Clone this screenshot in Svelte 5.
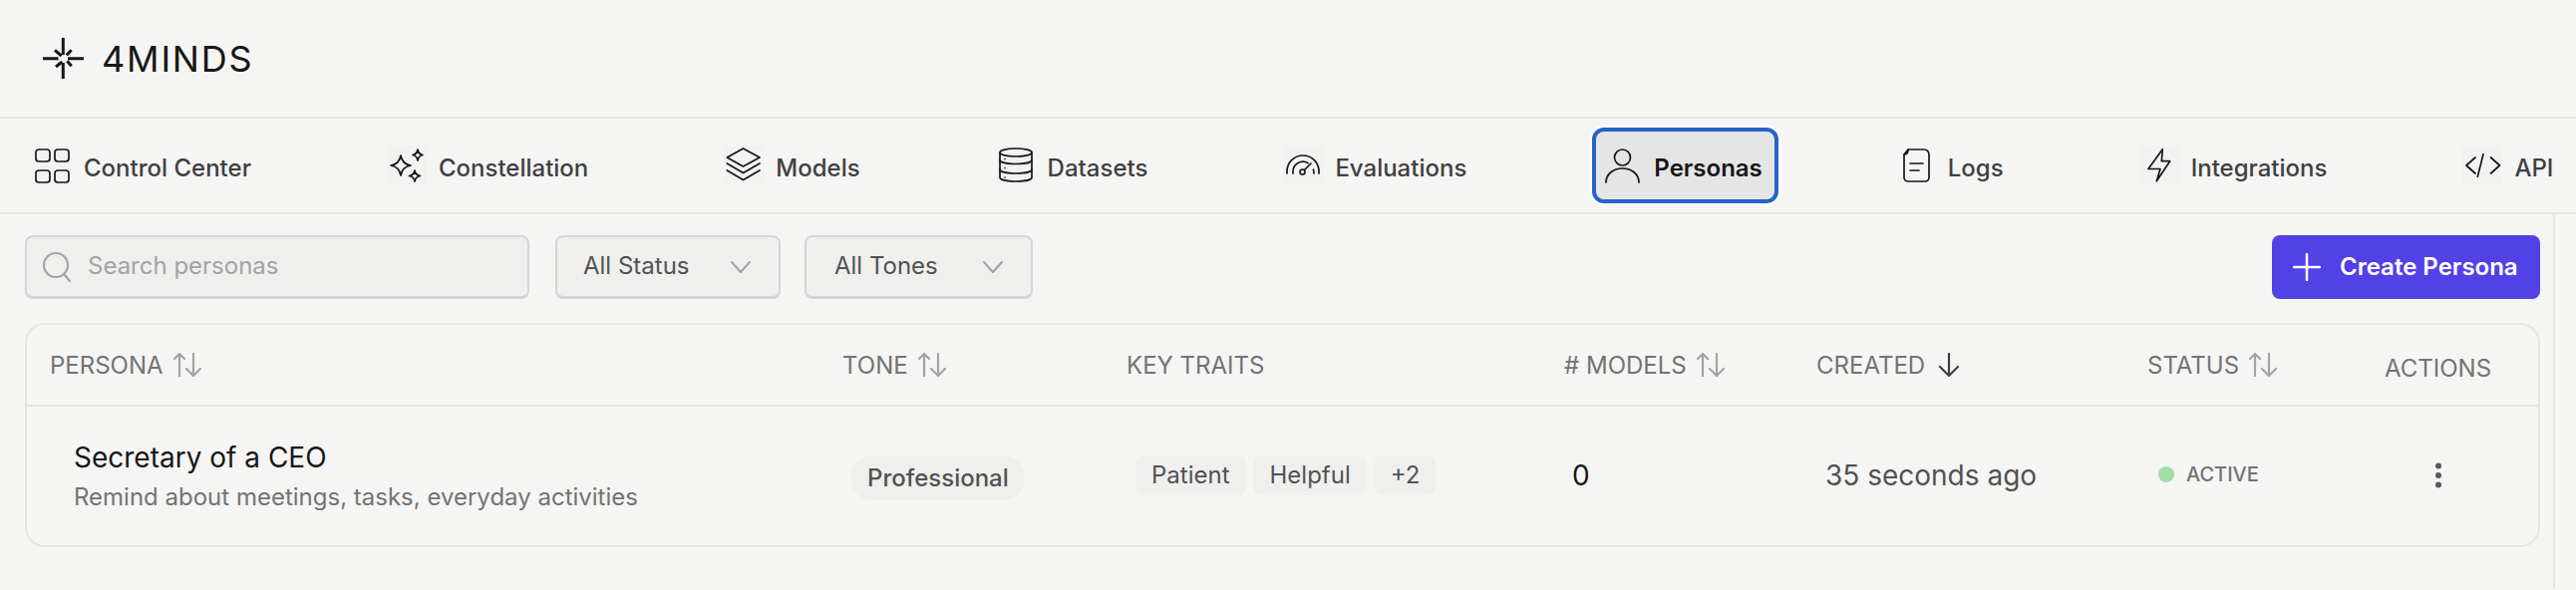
<script>
  const navItems = [
    { label: "Control Center", icon: "grid" },
    { label: "Constellation", icon: "sparkles" },
    { label: "Models", icon: "layers" },
    { label: "Datasets", icon: "database" },
    { label: "Evaluations", icon: "gauge" },
    { label: "Personas", icon: "user", active: true },
    { label: "Logs", icon: "doc", plain: true },
    { label: "Integrations", icon: "bolt" },
    { label: "API", icon: "code" },
  ];

  const columns = [
    { label: "Persona", sort: "both" },
    { label: "Tone", sort: "both" },
    { label: "Key traits" },
    { label: "# Models", sort: "both" },
    { label: "Created", sort: "down" },
    { label: "Status", sort: "both" },
    { label: "Actions", low: true },
  ];

  const traits = ["Patient", "Helpful", "+2"];
</script>

{#snippet navIcon(name)}
  <svg class="nav-icon" viewBox="0 0 40 40" fill="none" stroke="currentColor" stroke-width="1.700" stroke-linecap="round" stroke-linejoin="round">
    {#if name === "grid"}
      <rect x="4" y="4" width="14" height="12" rx="3" />
      <rect x="23" y="4" width="14" height="12" rx="3" />
      <rect x="4" y="25" width="14" height="12" rx="3" />
      <rect x="23" y="25" width="14" height="12" rx="3" />
    {:else if name === "sparkles"}
      <path d="M14 10c1 6 4 9 10 10-6 1-9 4-10 10-1-6-4-9-10-10 6-1 9-4 10-10z" />
      <path d="M31 4c.5 3 2 5 5 5.500-3 .5-4.500 2.500-5 5.500-.5-3-2-5-5-5.500 3-.5 4.500-2.500 5-5.500z" />
      <path d="M28 25c.5 3 2 5 5.500 5.500-3.500.5-5 2.500-5.500 5.500-.5-3-2-5-5.500-5.500 3.500-.5 5-2.500 5.500-5.500z" />
    {:else if name === "layers"}
      <path d="M19.500 3L36 12l-16.500 9L3.300 12z" />
      <path d="M3.300 18l16.200 9.500L36 18" />
      <path d="M3.300 25l16.200 9.500L36 25" />
    {:else if name === "database"}
      <ellipse cx="20" cy="7" rx="16" ry="4" />
      <path d="M4 7v25c0 2.500 7 4 16 4s16-1.500 16-4V7" />
      <path d="M4 14.500c0 2.500 7 4 16 4s16-1.500 16-4" />
      <path d="M4 24c0 2.500 7 4 16 4s16-1.500 16-4" />
      <path d="M9 13.500v.01M9 22.500v.01M9 32v.01" />
    {:else if name === "gauge"}
      <path d="M4 28v-2a16 16 0 0 1 32 0v2" />
      <path d="M10 28v-2a10 10 0 0 1 15-8.500" />
      <path d="M31 28l-.5-4" />
      <circle cx="19.500" cy="26.500" r="2.500" />
      <path d="M21.500 24.500L28 18" />
    {:else if name === "user"}
      <circle cx="20.500" cy="12" r="8" />
      <path d="M4 37c0-8 7-14 16.500-14S37 29 37 37" />
    {:else if name === "doc"}
      <path d="M12 4h16a5 5 0 0 1 5 5v23a4 4 0 0 1-4 4H12a4 4 0 0 1-4-4V9z" />
      <path d="M8 9c3 0 4-1.500 4-5" />
      <path d="M14 18h13M14 25h9" />
    {:else if name === "bolt"}
      <path d="M23.300 3.700L9 23.500h12l-3.700 12.200 13.400-20h-8.400z" />
    {:else if name === "code"}
      <path d="M13 12l-9 8 9 8M28.500 12l9 8-9 8M21 8.700l-5.700 22.600" />
    {/if}
  </svg>
{/snippet}

{#snippet sortIcon(kind)}
  {#if kind === "both"}
    <svg class="sort" viewBox="0 0 28 24" fill="none" stroke="#a3a3a3" stroke-width="2.200" stroke-linecap="round" stroke-linejoin="round">
      <path d="M6 23V1M1 6l5-5 5 5" />
      <path d="M20 1v22M13 16l7 7 7-7" />
    </svg>
  {:else}
    <svg class="sort" viewBox="0 0 28 24" fill="none" stroke="#404040" stroke-width="2.200" stroke-linecap="round" stroke-linejoin="round">
      <path d="M14 1v22M5 14l9 9 9-9" />
    </svg>
  {/if}
{/snippet}

<div class="page">
  <header class="brand">
    <svg class="logo" viewBox="0 0 41 41" fill="none" stroke="#171717" stroke-width="3">
      <path d="M20.300 0v17M20.300 25v16M0 20.700h15.500M25 20.700h16" />
      <path d="M12 12.300l6.700 5.700M28.700 12.300l-5 5M13 29l6.300-5M28.700 28.300l-4.400-5" />
    </svg>
    <span class="wordmark">4MINDS</span>
  </header>

  <nav class="nav">
    {#each navItems as item}
      <a class="nav-item" class:active={item.active} class:plain={item.plain}>
        {@render navIcon(item.icon)}
        <span>{item.label}</span>
      </a>
    {/each}
  </nav>

  <main class="content">
    <div class="toolbar">
      <label class="search">
        <svg viewBox="0 0 28 32" fill="none" stroke="#a3a3a3" stroke-width="2.200" stroke-linecap="round">
          <ellipse cx="13" cy="14" rx="12" ry="12" />
          <path d="M21 23l6 7" />
        </svg>
        <span>Search personas</span>
      </label>
      <div class="select status-select">
        <span>All Status</span>
        <svg viewBox="0 0 20 12" fill="none" stroke="#a3a3a3" stroke-width="2" stroke-linecap="round" stroke-linejoin="round"><path d="M1 1l9 10 9-10" /></svg>
      </div>
      <div class="select">
        <span>All Tones</span>
        <svg viewBox="0 0 20 12" fill="none" stroke="#a3a3a3" stroke-width="2" stroke-linecap="round" stroke-linejoin="round"><path d="M1 1l9 10 9-10" /></svg>
      </div>
      <button class="create">
        <svg viewBox="0 0 28 28" fill="none" stroke="#fff" stroke-width="2.500" stroke-linecap="round"><path d="M14 1v26M1 14h26" /></svg>
        <span>Create Persona</span>
      </button>
    </div>

    <section class="table">
      <div class="row head">
        {#each columns as col}
          <div class="th" class:low={col.low}>
            <span>{col.label}</span>
            {#if col.sort}{@render sortIcon(col.sort)}{/if}
          </div>
        {/each}
      </div>
      <div class="row body">
        <div class="persona">
          <div class="name">Secretary of a CEO</div>
          <div class="desc">Remind about meetings, tasks, everyday activities</div>
        </div>
        <div class="tone"><span>Professional</span></div>
        <div class="traits">
          {#each traits as t}<span>{t}</span>{/each}
        </div>
        <div class="count">0</div>
        <div class="created">35 seconds ago</div>
        <div class="status"><i></i>ACTIVE</div>
        <div class="actions">
          <svg viewBox="0 0 8 26" fill="#595959"><circle cx="4" cy="3.500" r="3" /><circle cx="4" cy="13" r="3" /><circle cx="4" cy="22.500" r="3" /></svg>
        </div>
      </div>
    </section>
  </main>
</div>

<style>
  :global(body) {
    margin: 0;
    background: #f5f5f4;
  }

  .page {
    width: 2584px;
    height: 592px;
    overflow: hidden;
    font-family: Inter, "Liberation Sans", sans-serif;
    font-size: 24px;
    color: #404040;
    background: #f5f5f4;
  }

  .brand {
    height: 117px;
    display: flex;
    align-items: center;
    gap: 18px;
    padding-left: 43px;
    border-bottom: 2px solid #e5e5e4;
  }

  .logo {
    width: 41px;
    height: 41px;
  }

  .wordmark {
    font-size: 36px;
    letter-spacing: 1.800px;
    color: #171717;
  }

  .nav {
    height: 94px;
    display: flex;
    align-items: center;
    gap: 108px;
    padding-left: 22px;
    border-bottom: 2px solid #e5e5e4;
  }

  .nav-item {
    display: flex;
    align-items: center;
    gap: 12px;
    height: 76px;
    padding: 0 18px 0 10px;
    box-sizing: border-box;
    border-radius: 12px;
    font-weight: 500;
    white-space: nowrap;
  }

  .nav-item span {
    padding-top: 4px;
  }

  .nav-item.active {
    padding-right: 16px;
    background: #e5e5e5;
    color: #171717;
    font-weight: 600;
    box-shadow: 0 0 0 2px #fff;
    outline: 4px solid #2563c9;
    outline-offset: -4px;
  }

  .nav-icon {
    width: 40px;
    height: 40px;
    color: #171717;
    background: #f2f2f1;
  }

  .active .nav-icon,
  .plain .nav-icon {
    background: none;
  }

  .content {
    width: 2561px;
    height: 375px;
    border-right: 2px solid #e5e5e4;
  }

  .toolbar {
    display: flex;
    gap: 26px;
    padding: 21px 13px 24px 25px;
  }

  .search,
  .select {
    height: 64px;
    box-sizing: border-box;
    display: flex;
    align-items: center;
    background: #efefee;
    border: 2px solid #d4d4d4;
    border-bottom-width: 3px;
    border-radius: 8px;
  }

  .search {
    width: 506px;
    padding-left: 16px;
    gap: 17px;
    color: #a3a3a3;
  }

  .search span,
  .select span,
  .create span {
    padding-bottom: 2px;
  }

  .search svg {
    width: 28px;
    height: 32px;
  }

  .select {
    width: 226px;
    padding: 0 28px 0 26px;
    justify-content: space-between;
    color: #525252;
  }

  .select + .select {
    width: 229px;
    margin-left: -2px;
    padding-left: 28px;
  }

  .select svg {
    width: 20px;
    height: 12px;
  }

  .create {
    margin-left: auto;
    width: 269px;
    height: 64px;
    display: flex;
    align-items: center;
    gap: 19px;
    padding: 0 0 0 21px;
    border: 0;
    border-radius: 8px;
    background: #5241e4;
    color: #fff;
    font: 600 24px Inter, "Liberation Sans", sans-serif;
  }

  .create svg {
    width: 28px;
    height: 28px;
  }

  .table {
    width: 2523px;
    margin-left: 25px;
    height: 225px;
    box-sizing: border-box;
    border: 2px solid #e5e5e4;
    border-radius: 20px;
  }

  .row {
    display: grid;
    grid-template-columns: 795px 285px 439px 253px 332px 238px 1fr;
    padding-left: 23px;
  }

  .head {
    height: 80px;
    align-items: center;
    border-bottom: 2px solid #e5e5e4;
    color: #737373;
  }

  .th {
    display: flex;
    align-items: center;
    gap: 10px;
    text-transform: uppercase;
    white-space: nowrap;
  }

  .th.low {
    margin-top: 6px;
  }

  .sort {
    width: 28px;
    height: 24px;
  }

  .body {
    height: 141px;
    align-items: center;
  }

  .persona {
    padding-left: 24px;
  }

  .name {
    font-size: 28px;
    line-height: 36px;
    color: #171717;
  }

  .desc {
    margin-top: 4px;
    line-height: 36px;
    color: #737373;
  }

  .tone {
    padding-left: 8px;
    margin-top: 1px;
  }

  .tone span {
    display: inline-block;
    padding: 0 16px 0 17px;
    line-height: 45px;
    border-radius: 23px;
    background: #efefee;
    font-weight: 500;
    color: #525252;
  }

  .traits {
    display: flex;
    gap: 8px;
    padding-left: 9px;
    margin-top: -3px;
  }

  .traits span {
    padding: 0 16px;
    line-height: 40px;
    border-radius: 8px;
    background: #efefee;
    color: #525252;
  }

  .count {
    padding-left: 8px;
    padding-bottom: 4px;
    font-size: 28px;
    color: #171717;
  }

  .created {
    padding-left: 9px;
    padding-bottom: 4px;
    font-size: 28px;
    color: #525252;
  }

  .status {
    display: flex;
    align-items: center;
    gap: 12px;
    padding-left: 11px;
    padding-bottom: 6px;
    font-size: 20px;
    font-weight: 500;
    color: #737373;
  }

  .status i {
    width: 16px;
    height: 16px;
    border-radius: 50%;
    background: #a3dea8;
  }

  .actions {
    padding-left: 50px;
    padding-bottom: 4px;
  }

  .actions svg {
    display: block;
    width: 8px;
    height: 26px;
  }
</style>
